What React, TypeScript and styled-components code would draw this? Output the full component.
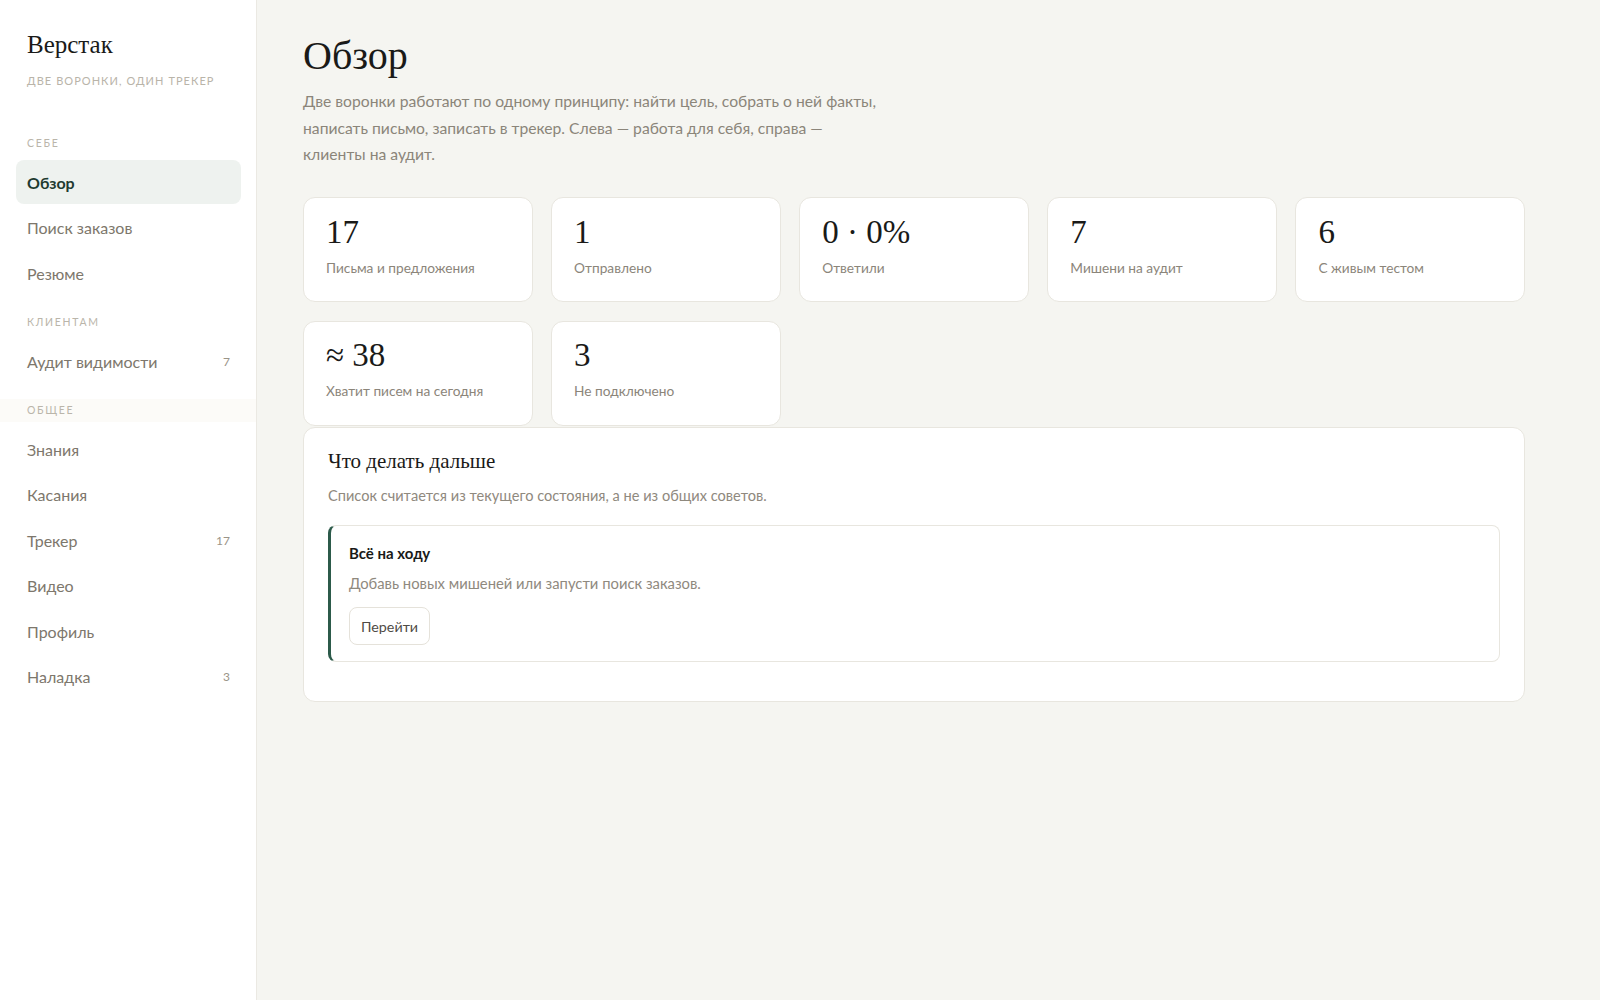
import { createGlobalStyle, styled } from 'styled-components';

const GlobalStyle = createGlobalStyle`
  * { box-sizing: border-box; }
  body {
    margin: 0;
    background: #f5f5f1;
    font-family: Lato, "Open Sans", sans-serif;
    color: #1c1c1a;
  }
`;

type NavItem = { label: string; badge?: number; active?: boolean };
type NavSection = { title: string; tinted?: boolean; items: NavItem[] };

const sections: NavSection[] = [
  {
    title: 'Себе',
    items: [
      { label: 'Обзор', active: true },
      { label: 'Поиск заказов' },
      { label: 'Резюме' },
    ],
  },
  {
    title: 'Клиентам',
    items: [{ label: 'Аудит видимости', badge: 7 }],
  },
  {
    title: 'Общее',
    tinted: true,
    items: [
      { label: 'Знания' },
      { label: 'Касания' },
      { label: 'Трекер', badge: 17 },
      { label: 'Видео' },
      { label: 'Профиль' },
      { label: 'Наладка', badge: 3 },
    ],
  },
];

const stats = [
  { value: '17', label: 'Письма и предложения' },
  { value: '1', label: 'Отправлено' },
  { value: '0 · 0%', label: 'Ответили' },
  { value: '7', label: 'Мишени на аудит' },
  { value: '6', label: 'С живым тестом' },
  { value: '≈ 38', label: 'Хватит писем на сегодня' },
  { value: '3', label: 'Не подключено' },
];

const App = () => {
  return (
    <>
      <GlobalStyle />
      <Layout>
        <Sidebar>
          <Brand>Верстак</Brand>
          <Tagline>Две воронки, один трекер</Tagline>
          <Nav>
            {sections.map((section) => (
              <Section key={section.title}>
                <SectionTitle $tinted={section.tinted}>{section.title}</SectionTitle>
                <ItemList>
                  {section.items.map((item) => (
                    <Item key={item.label} $active={item.active}>
                      <span>{item.label}</span>
                      {item.badge !== undefined && <Badge>{item.badge}</Badge>}
                    </Item>
                  ))}
                </ItemList>
              </Section>
            ))}
          </Nav>
        </Sidebar>

        <Main>
          <Content>
            <Title>Обзор</Title>
            <Lead>
              Две воронки работают по одному принципу: найти цель, собрать о ней факты,
              написать письмо, записать в трекер. Слева — работа для себя, справа —
              клиенты на аудит.
            </Lead>

            <StatGrid>
              {stats.map((stat) => (
                <StatCard key={stat.label}>
                  <StatValue>{stat.value}</StatValue>
                  <StatLabel>{stat.label}</StatLabel>
                </StatCard>
              ))}
            </StatGrid>

            <Panel>
              <PanelTitle>Что делать дальше</PanelTitle>
              <PanelText>Список считается из текущего состояния, а не из общих советов.</PanelText>
              <Task>
                <TaskTitle>Всё на ходу</TaskTitle>
                <TaskText>Добавь новых мишеней или запусти поиск заказов.</TaskText>
                <Button>Перейти</Button>
              </Task>
            </Panel>
          </Content>
        </Main>
      </Layout>
    </>
  );
};

export default App;

const Layout = styled.div`
  display: flex;
  min-height: 100vh;
`;

const Sidebar = styled.aside`
  width: 257px;
  flex-shrink: 0;
  background: #ffffff;
  border-right: 1px solid #ebe9e3;
  padding: 30px 15px 30px 16px;
  display: flex;
  flex-direction: column;
`;

const Brand = styled.div`
  font-family: "Liberation Serif", serif;
  font-size: 25px;
  line-height: 29px;
  color: #1a1a18;
  padding-left: 11px;
`;

const Tagline = styled.div`
  margin-top: 14px;
  padding-left: 11px;
  font-size: 11px;
  line-height: 16px;
  letter-spacing: 1.05px;
  text-transform: uppercase;
  color: #b9b4a9;
`;

const Nav = styled.nav`
  margin-top: 47px;
  display: flex;
  flex-direction: column;
  gap: 20px;
`;

const Section = styled.div`
  display: flex;
  flex-direction: column;
  gap: 10px;
`;

const SectionTitle = styled.div<{ $tinted?: boolean }>`
  margin: -4.5px -15px -4.5px -16px;
  padding: 4.5px 15px 4.5px 27px;
  font-size: 10.5px;
  line-height: 14px;
  letter-spacing: 1.7px;
  text-transform: uppercase;
  color: #bab5aa;
  background: ${(p) => (p.$tinted ? '#fcfbf8' : 'transparent')};
`;

const ItemList = styled.div`
  display: flex;
  flex-direction: column;
  gap: 1.5px;
`;

const Item = styled.div<{ $active?: boolean }>`
  height: 44px;
  padding: 0 11px;
  border-radius: 8px;
  display: flex;
  align-items: center;
  justify-content: space-between;
  font-size: 16px;
  font-weight: ${(p) => (p.$active ? 700 : 400)};
  color: ${(p) => (p.$active ? '#1f3b31' : '#7d776c')};
  background: ${(p) => (p.$active ? '#eef2ef' : 'transparent')};
`;

const Badge = styled.span`
  font-size: 12px;
  color: #9a9488;
`;

const Main = styled.main`
  flex: 1;
  padding: 34px 46px 40px;
`;

const Content = styled.div`
  max-width: 1222px;
`;

const Title = styled.h1`
  margin: 0;
  font-family: "Liberation Serif", serif;
  font-weight: 400;
  font-size: 40px;
  line-height: 44px;
  color: #1a1a18;
`;

const Lead = styled.p`
  margin: 10px 0 0;
  max-width: 585px;
  font-size: 15.7px;
  line-height: 26.5px;
  color: #8b857a;
`;

const StatGrid = styled.div`
  margin-top: 29.5px;
  display: grid;
  grid-template-columns: repeat(5, 1fr);
  gap: 18.5px 18.5px;
`;

const StatCard = styled.div`
  background: #ffffff;
  border: 1px solid #e8e6df;
  border-radius: 12px;
  padding: 15.5px 22px 23.5px;
`;

const StatValue = styled.div`
  font-family: "Liberation Serif", serif;
  font-size: 33px;
  line-height: 36px;
  color: #1a1a18;
`;

const StatLabel = styled.div`
  margin-top: 8px;
  font-size: 13.7px;
  line-height: 20px;
  color: #8b857a;
`;

const Panel = styled.section`
  margin-top: 1.5px;
  background: #ffffff;
  border: 1px solid #e8e6df;
  border-radius: 12px;
  padding: 19px 24px 39px;
`;

const PanelTitle = styled.h2`
  margin: 0;
  font-family: "Liberation Serif", serif;
  font-weight: 400;
  font-size: 21px;
  line-height: 28px;
  color: #1a1a18;
`;

const PanelText = styled.p`
  margin: 11px 0 0;
  font-size: 14.6px;
  line-height: 20px;
  color: #8f897e;
`;

const Task = styled.div`
  margin-top: 19px;
  border: 1px solid #e8e6df;
  border-left: 3px solid #2c5a4a;
  border-radius: 8px;
  padding: 17px 18px 16px;
  display: flex;
  flex-direction: column;
  align-items: flex-start;
`;

const TaskTitle = styled.div`
  font-size: 15px;
  font-weight: 700;
  line-height: 20px;
  color: #1a1a18;
`;

const TaskText = styled.div`
  margin-top: 10px;
  font-size: 14.8px;
  line-height: 20px;
  color: #8f897e;
`;

const Button = styled.button`
  margin-top: 14px;
  height: 38px;
  padding: 0 11px;
  background: #ffffff;
  border: 1px solid #e5e2da;
  border-radius: 8px;
  font-family: Lato, "Open Sans", sans-serif;
  font-size: 14.3px;
  color: #4f4b45;
  cursor: pointer;
`;
